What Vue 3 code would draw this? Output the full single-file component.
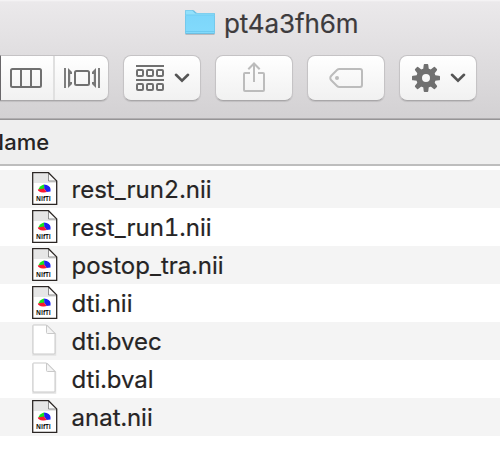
<script setup>
const files = [
  { name: 'rest_run2.nii', nifti: true },
  { name: 'rest_run1.nii', nifti: true },
  { name: 'postop_tra.nii', nifti: true },
  { name: 'dti.nii', nifti: true },
  { name: 'dti.bvec', nifti: false },
  { name: 'dti.bval', nifti: false },
  { name: 'anat.nii', nifti: true },
]
</script>

<template>
  <div class="window">
    <header class="chrome">
      <div class="title">
        <svg class="folder" width="32" height="28" viewBox="0 0 32 28">
          <defs>
            <linearGradient id="folderFill" x1="0" y1="0" x2="0" y2="1">
              <stop offset="0" stop-color="#7dd6fa" />
              <stop offset="1" stop-color="#82dafc" />
            </linearGradient>
          </defs>
          <path d="M1.500 26.200h29" stroke="#a9a8ab" stroke-width="1" />
          <path d="M1 3q0-1 1-1h6.500q1 0 1.600.6l2 2q.5.4 1.400.4H30q1 0 1 1v19q0 1-1 1H2q-1 0-1-1z" fill="#6dbfe2" />
          <path d="M1.600 3q0-.6.6-.6h6l3 3h18.600q.6 0 .6.6v2H1.600z" fill="#92e0fb" />
          <path d="M1.600 7.300h28.800V25H1.600z" fill="url(#folderFill)" />
          <path d="M1.600 7h28.800" stroke="#62c3ec" stroke-width=".7" />
          <path d="M1.600 23.500h28.800" stroke="#67c5ec" stroke-width=".8" />
        </svg>
        <span class="title-text">pt4a3fh6m</span>
      </div>
      <div class="toolbar">
        <div class="segments">
          <div class="segment first">
            <svg width="32" height="20" viewBox="0 0 32 20" fill="none" stroke="#707070" stroke-width="2">
              <rect x="1" y="1" width="30" height="18" rx="1.500" />
              <path d="M11 1v18M21 1v18" />
            </svg>
          </div>
          <div class="segment second">
            <svg width="36" height="20" viewBox="0 0 36 20" fill="none" stroke="#707070" stroke-width="2">
              <rect x="11" y="3" width="14" height="14" rx="1.500" />
              <path d="M1 0v20M35 0v20" stroke-width="1.800" />
              <path d="M4 0l4 4v2H6.200v8H8v2l-4 4zM32 0l-4 4v2h1.800v8H28v2l4 4z" fill="#777" stroke="none" />
            </svg>
          </div>
        </div>
        <div class="button arrange">
          <svg width="28" height="26" viewBox="0 0 28 26" fill="none" stroke="#707070" stroke-width="2">
            <path d="M0 1h28M0 15h28" />
            <rect x="1" y="5" width="6" height="6" rx="1" />
            <rect x="11" y="5" width="6" height="6" rx="1" />
            <rect x="21" y="5" width="6" height="6" rx="1" />
            <rect x="1" y="19" width="6" height="6" rx="1" />
            <rect x="11" y="19" width="6" height="6" rx="1" />
            <rect x="21" y="19" width="6" height="6" rx="1" />
          </svg>
          <svg class="chevron" width="16" height="10" viewBox="0 0 16 10">
            <path d="M2 1.800L8 7.600l6-5.800" />
          </svg>
        </div>
        <div class="button share">
          <svg width="22" height="30" viewBox="0 0 22 30" fill="none" stroke="#bcbcbc" stroke-width="2">
            <path d="M7 11H2q-1 0-1 1v16q0 1 1 1h18q1 0 1-1V12q0-1-1-1h-5M11 20V1.500M5.300 7.300L11 1.500l5.700 5.800" />
          </svg>
        </div>
        <div class="button tag">
          <svg width="34" height="20" viewBox="0 0 34 20" fill="none" stroke="#bcbcbc" stroke-width="2">
            <path d="M10.500 1H31q2 0 2 2v14q0 2-2 2H10.500q-1.500 0-2.500-1l-5.500-5.500q-2.500-2.500 0-5L8 2q1-1 2.500-1z" />
            <circle cx="8" cy="10" r="2" fill="#bcbcbc" stroke="none" />
          </svg>
        </div>
        <div class="button gear">
          <svg width="28" height="28" viewBox="-14 -14 28 28">
            <g fill="#707070">
              <path v-for="n in 8" :key="n" d="M-3-7l.7-6q.1-1 .9-1h2.800q.8 0 .9 1L3-7z" :transform="`rotate(${n * 45})`" />
            </g>
            <circle r="6.900" fill="none" stroke="#707070" stroke-width="5.800" />
          </svg>
          <svg class="chevron" width="16" height="10" viewBox="0 0 16 10">
            <path d="M2 1.800L8 7.600l6-5.800" />
          </svg>
        </div>
      </div>
    </header>

    <div class="columns"><span class="column-name">Name</span></div>

    <ul class="files">
      <li v-for="file in files" :key="file.name" class="row">
        <svg v-if="file.nifti" class="doc" width="26" height="34" viewBox="0 0 26 34">
          <path d="M1 1h15.500L24.500 9v23.500H1z" fill="#fff" />
          <path d="M1.500 1.500h15L24 9v2H1.500z" fill="#e6e6e6" />
          <path d="M16.500 1v8h8" fill="#fafafa" stroke="#777" stroke-width=".8" />
          <path d="M.7.700h15.800l8.200 8.200V32.300H.7z" fill="none" stroke="#2b2624" stroke-width="1.300" />
          <path d="M12 12.500Q8 13.500 6.300 17.500l5 .5 1.200-1z" fill="#16e51f" />
          <path d="M12 12.500q6 .5 6.500 4.500v2.500l-4 .5-2.200-3.500z" fill="#1c22f0" />
          <path d="M5.800 17.400l6.200-.9 2.800 3.500q-1.500.6-4 .4-4.500-.4-5-3z" fill="#fa1730" />
          <text x="4" y="29.200" textLength="14.800" lengthAdjust="spacingAndGlyphs">NIfTI</text>
        </svg>
        <svg v-else class="doc" width="26" height="34" viewBox="0 0 26 34">
          <path d="M1 2h14.500l8 8v21H1z" fill="none" stroke="#e2e2e2" stroke-width="1.500" />
          <path d="M1.500 1h13l8.500 8.500V29q0 1-1 1H2q-1 0-1-1V2q0-1 .5-1z" fill="#fff" stroke="#c9c9c9" stroke-width="1" />
          <path d="M14.500 1v7.500q0 1 1 1H23z" fill="#f4f4f4" stroke="#c9c9c9" stroke-width="1" />
        </svg>
        <span class="name">{{ file.name }}</span>
      </li>
    </ul>
  </div>
</template>

<style>
body {
  margin: 0;
  background: #fff;
}
</style>

<style scoped>
.window {
  width: 500px;
  height: 452px;
  overflow: hidden;
  background: #fff;
  color: #262424;
  font-family: Inter, "Liberation Sans", sans-serif;
}
.chrome {
  box-sizing: border-box;
  height: 120px;
  border-bottom: 1px solid #969496;
  background: linear-gradient(#f7f6f7 0, #ebe9eb 2px, #d3d1d3 118px, #b0aeb0 118px);
}
.title {
  display: flex;
  align-items: center;
  height: 46px;
  padding-left: 184px;
}
.folder {
  margin-top: -2px;
}
.title-text {
  margin-left: 8px;
  padding-top: 1px;
  font-size: 26px;
  line-height: 32px;
  letter-spacing: -0.1px;
  color: #3d3b3d;
  -webkit-text-stroke: 0.2px #3d3b3d;
  white-space: nowrap;
}
.toolbar {
  display: flex;
  gap: 14px;
  padding-top: 9px;
}
.segments,
.button {
  box-sizing: border-box;
  display: flex;
  align-items: center;
  height: 46px;
  border: 1px solid #c5c3c5;
  border-bottom-color: #a9a7a9;
  border-radius: 8px;
  background: linear-gradient(#fff, #f1f1f1);
  box-shadow: 0 1px 1px rgba(0, 0, 0, 0.1);
}
.segments {
  width: 109px;
  border-left-color: #69676a;
  border-radius: 0 8px 8px 0;
}
.segment {
  box-sizing: border-box;
  display: flex;
  align-items: center;
  height: 44px;
}
.first {
  width: 54px;
  padding-left: 9px;
  border-right: 2px solid #e0e0e0;
}
.second {
  padding-left: 9px;
}
.button {
  width: 78px;
}
.arrange {
  padding-left: 12px;
}
.arrange .chevron,
.gear .chevron {
  margin-left: 10px;
}
.share,
.tag {
  justify-content: center;
}
.share svg {
  margin-top: -2px;
}
.gear {
  padding-left: 12px;
}
.chevron path {
  fill: none;
  stroke: #555;
  stroke-width: 2.600;
  stroke-linecap: round;
  stroke-linejoin: miter;
}
.columns {
  box-sizing: border-box;
  height: 46px;
  border-bottom: 2px solid #bdbdbd;
  background: #efefef;
}
.column-name {
  display: block;
  margin-left: -12.500px;
  font-size: 22px;
  font-weight: 500;
  line-height: 45px;
}
.files {
  margin: 0;
  padding: 4px 0 0;
  list-style: none;
}
.row {
  display: flex;
  align-items: center;
  height: 38px;
  padding-left: 32px;
}
.row:nth-child(odd) {
  background: #f4f4f4;
}
.doc text {
  font-family: "Open Sans", "Liberation Sans", sans-serif;
  font-size: 6.800px;
  font-weight: 700;
  fill: #111;
}
.name {
  margin-left: 13.500px;
  padding-top: 2px;
  font-size: 24px;
  line-height: 36px;
  -webkit-text-stroke: 0.2px #262424;
  white-space: nowrap;
  font-feature-settings: "tnum";
}
</style>
